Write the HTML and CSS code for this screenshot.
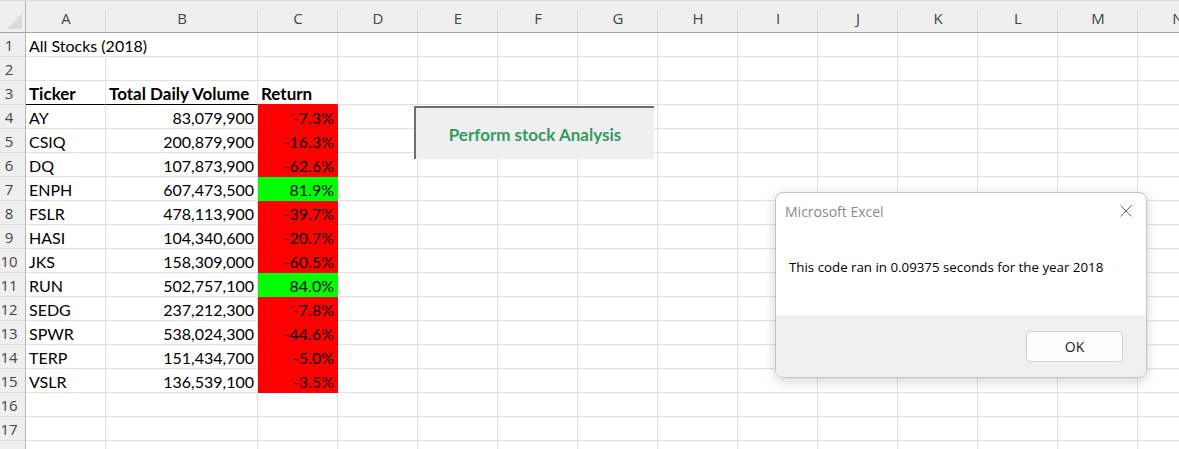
FILE: index.html
```html
<!DOCTYPE html>
<html lang="en">
<head>
<meta charset="utf-8">
<title>Excel - All Stocks (2018)</title>
<link rel="stylesheet" href="styles.css">
</head>
<body>
<div class="sheet">
  <div class="grid">
    <div class="hd corner"><svg class="tri" width="16" height="17" viewBox="0 0 16 17"><polygon points="15,0 15,16 0,16" fill="#dadada"/></svg></div>
    <div class="hd col">A</div><div class="hd col">B</div><div class="hd col">C</div><div class="hd col">D</div>
    <div class="hd col">E</div><div class="hd col">F</div><div class="hd col">G</div><div class="hd col">H</div>
    <div class="hd col">I</div><div class="hd col">J</div><div class="hd col">K</div><div class="hd col">L</div>
    <div class="hd col">M</div><div class="hd col">N</div>

    <div class="rh">1</div><div class="c ov">All Stocks (2018)</div><div class="c"></div><div class="c"></div><div class="c"></div><div class="c"></div><div class="c"></div><div class="c"></div><div class="c"></div><div class="c"></div><div class="c"></div><div class="c"></div><div class="c"></div><div class="c"></div><div class="c"></div>
    <div class="rh">2</div><div class="c"></div><div class="c"></div><div class="c"></div><div class="c"></div><div class="c"></div><div class="c"></div><div class="c"></div><div class="c"></div><div class="c"></div><div class="c"></div><div class="c"></div><div class="c"></div><div class="c"></div><div class="c"></div>
    <div class="rh">3</div><div class="c b ul">Ticker</div><div class="c b ul">Total Daily Volume</div><div class="c b redline">Return</div><div class="c"></div><div class="c"></div><div class="c"></div><div class="c"></div><div class="c"></div><div class="c"></div><div class="c"></div><div class="c"></div><div class="c"></div><div class="c"></div><div class="c"></div>
    <div class="rh">4</div><div class="c">AY</div><div class="c n">83,079,900</div><div class="c n red">-7.3%</div><div class="c"></div><div class="c"></div><div class="c"></div><div class="c"></div><div class="c"></div><div class="c"></div><div class="c"></div><div class="c"></div><div class="c"></div><div class="c"></div><div class="c"></div>
    <div class="rh">5</div><div class="c">CSIQ</div><div class="c n">200,879,900</div><div class="c n red">-16.3%</div><div class="c"></div><div class="c"></div><div class="c"></div><div class="c"></div><div class="c"></div><div class="c"></div><div class="c"></div><div class="c"></div><div class="c"></div><div class="c"></div><div class="c"></div>
    <div class="rh">6</div><div class="c">DQ</div><div class="c n">107,873,900</div><div class="c n red">-62.6%</div><div class="c"></div><div class="c"></div><div class="c"></div><div class="c"></div><div class="c"></div><div class="c"></div><div class="c"></div><div class="c"></div><div class="c"></div><div class="c"></div><div class="c"></div>
    <div class="rh">7</div><div class="c">ENPH</div><div class="c n">607,473,500</div><div class="c n green">81.9%</div><div class="c"></div><div class="c"></div><div class="c"></div><div class="c"></div><div class="c"></div><div class="c"></div><div class="c"></div><div class="c"></div><div class="c"></div><div class="c"></div><div class="c"></div>
    <div class="rh">8</div><div class="c">FSLR</div><div class="c n">478,113,900</div><div class="c n red">-39.7%</div><div class="c"></div><div class="c"></div><div class="c"></div><div class="c"></div><div class="c"></div><div class="c"></div><div class="c"></div><div class="c"></div><div class="c"></div><div class="c"></div><div class="c"></div>
    <div class="rh">9</div><div class="c">HASI</div><div class="c n">104,340,600</div><div class="c n red">-20.7%</div><div class="c"></div><div class="c"></div><div class="c"></div><div class="c"></div><div class="c"></div><div class="c"></div><div class="c"></div><div class="c"></div><div class="c"></div><div class="c"></div><div class="c"></div>
    <div class="rh">10</div><div class="c">JKS</div><div class="c n">158,309,000</div><div class="c n red">-60.5%</div><div class="c"></div><div class="c"></div><div class="c"></div><div class="c"></div><div class="c"></div><div class="c"></div><div class="c"></div><div class="c"></div><div class="c"></div><div class="c"></div><div class="c"></div>
    <div class="rh">11</div><div class="c">RUN</div><div class="c n">502,757,100</div><div class="c n green">84.0%</div><div class="c"></div><div class="c"></div><div class="c"></div><div class="c"></div><div class="c"></div><div class="c"></div><div class="c"></div><div class="c"></div><div class="c"></div><div class="c"></div><div class="c"></div>
    <div class="rh">12</div><div class="c">SEDG</div><div class="c n">237,212,300</div><div class="c n red">-7.8%</div><div class="c"></div><div class="c"></div><div class="c"></div><div class="c"></div><div class="c"></div><div class="c"></div><div class="c"></div><div class="c"></div><div class="c"></div><div class="c"></div><div class="c"></div>
    <div class="rh">13</div><div class="c">SPWR</div><div class="c n">538,024,300</div><div class="c n red">-44.6%</div><div class="c"></div><div class="c"></div><div class="c"></div><div class="c"></div><div class="c"></div><div class="c"></div><div class="c"></div><div class="c"></div><div class="c"></div><div class="c"></div><div class="c"></div>
    <div class="rh">14</div><div class="c">TERP</div><div class="c n">151,434,700</div><div class="c n red">-5.0%</div><div class="c"></div><div class="c"></div><div class="c"></div><div class="c"></div><div class="c"></div><div class="c"></div><div class="c"></div><div class="c"></div><div class="c"></div><div class="c"></div><div class="c"></div>
    <div class="rh">15</div><div class="c">VSLR</div><div class="c n">136,539,100</div><div class="c n red">-3.5%</div><div class="c"></div><div class="c"></div><div class="c"></div><div class="c"></div><div class="c"></div><div class="c"></div><div class="c"></div><div class="c"></div><div class="c"></div><div class="c"></div><div class="c"></div>
    <div class="rh">16</div><div class="c"></div><div class="c"></div><div class="c"></div><div class="c"></div><div class="c"></div><div class="c"></div><div class="c"></div><div class="c"></div><div class="c"></div><div class="c"></div><div class="c"></div><div class="c"></div><div class="c"></div><div class="c"></div>
    <div class="rh">17</div><div class="c"></div><div class="c"></div><div class="c"></div><div class="c"></div><div class="c"></div><div class="c"></div><div class="c"></div><div class="c"></div><div class="c"></div><div class="c"></div><div class="c"></div><div class="c"></div><div class="c"></div><div class="c"></div>
    <div class="rh">18</div><div class="c"></div><div class="c"></div><div class="c"></div><div class="c"></div><div class="c"></div><div class="c"></div><div class="c"></div><div class="c"></div><div class="c"></div><div class="c"></div><div class="c"></div><div class="c"></div><div class="c"></div><div class="c"></div>
  </div>

  <div class="macro-btn">Perform stock Analysis</div>

  <div class="dialog">
    <div class="dlg-title">Microsoft Excel</div>
    <svg class="dlg-close" width="12" height="12" viewBox="0 0 12 12"><path d="M0.5 0.5 L11.5 11.5 M11.5 0.5 L0.5 11.5" stroke="#6b6b6b" stroke-width="1" fill="none"/></svg>
    <div class="dlg-msg">This code ran in 0.09375 seconds for the year 2018</div>
    <div class="dlg-foot">
      <div class="ok-btn">OK</div>
    </div>
  </div>
</div>
</body>
</html>
```
FILE: styles.css
```css
html, body {
  margin: 0;
  padding: 0;
  background: #ffffff;
  overflow: hidden;
}
.sheet {
  position: relative;
  width: 1179px;
  height: 449px;
  overflow: hidden;
  border-top: 1px solid #d9d9d9;
  box-sizing: border-box;
}
.grid {
  display: grid;
  grid-template-columns: 26px 80px 152px repeat(12, 80px);
  grid-template-rows: 32px;
  grid-auto-rows: 24px;
  width: max-content;
}
.hd {
  position: relative;
  background: #efefef;
  border-bottom: 1px solid #a5a5a5;
  box-sizing: border-box;
  font-family: "Open Sans", "Noto Sans", sans-serif;
  font-size: 15px;
  color: #444444;
  text-align: center;
  line-height: 34px;
}
.hd.col::after {
  content: "";
  position: absolute;
  right: 0;
  top: 9px;
  bottom: 0;
  width: 1px;
  background: #dadada;
}
.corner {
  border-right: 1px solid #b5b5b5;
}
.tri {
  position: absolute;
  left: 7px;
  top: 12px;
}
.rh {
  background: #efefef;
  border-right: 1px solid #b5b5b5;
  border-bottom: 1px solid #dcdcdc;
  box-sizing: border-box;
  font-family: "Open Sans", "Noto Sans", sans-serif;
  font-size: 15px;
  color: #444444;
  text-align: center;
  padding-right: 7px;
  line-height: 24px;
}
.c {
  box-sizing: border-box;
  border-right: 1px solid #e1e1e1;
  border-bottom: 1px solid #e1e1e1;
  font-family: Lato, "Liberation Sans", sans-serif;
  font-size: 16px;
  color: #000000;
  white-space: nowrap;
  padding: 1px 3px 0 3px;
  line-height: 23px;
}
.c.ov {
  overflow: visible;
  border-right-color: transparent;
}
.c.b {
  font-weight: 700;
  font-size: 17px;
}
.c.ul {
  border-bottom-color: #000000;
}
.c.redline {
  border-bottom-color: #ff0000;
}
.c.n {
  text-align: right;
}
.c.red {
  background: #ff0000;
  border-right-color: #ff0000;
  border-bottom-color: #ff0000;
}
.c.green {
  background: #00ff00;
  border-right-color: #00ff00;
  border-bottom-color: #00ff00;
}
.macro-btn {
  position: absolute;
  left: 414px;
  top: 105px;
  width: 240px;
  height: 53px;
  box-sizing: border-box;
  background: #efefef;
  border-top: 2px solid #6f6f6f;
  border-left: 2px solid #6f6f6f;
  display: flex;
  align-items: center;
  justify-content: center;
  font-family: Lato, "Liberation Sans", sans-serif;
  font-weight: 700;
  font-size: 17px;
  color: #349a62;
  padding-top: 2px;
}
.dialog {
  position: absolute;
  left: 775px;
  top: 191px;
  width: 372px;
  height: 186px;
  box-sizing: border-box;
  background: #ffffff;
  border: 1px solid #c4c4c4;
  border-radius: 8px;
  box-shadow: 0 3px 12px rgba(0, 0, 0, 0.18);
  overflow: hidden;
  display: flex;
  flex-direction: column;
  font-family: "Open Sans", "Noto Sans", sans-serif;
}
.dlg-title {
  padding: 9px 0 0 9px;
  height: 40px;
  box-sizing: border-box;
  font-size: 14px;
  color: #8a8a8a;
}
.dlg-close {
  position: absolute;
  left: 344px;
  top: 12px;
}
.dlg-msg {
  padding: 25px 0 0 13px;
  height: 82px;
  box-sizing: border-box;
  font-size: 13.3px;
  color: #000000;
}
.dlg-foot {
  flex: 1;
  background: #f0f0f0;
  display: flex;
  justify-content: flex-end;
  align-items: flex-start;
  padding: 16px 23px 0 0;
}
.ok-btn {
  width: 97px;
  height: 31px;
  box-sizing: border-box;
  background: #fdfdfd;
  border: 1px solid #cfcfcf;
  border-radius: 4px;
  display: flex;
  align-items: center;
  justify-content: center;
  font-size: 14px;
  color: #1a1a1a;
}
```
